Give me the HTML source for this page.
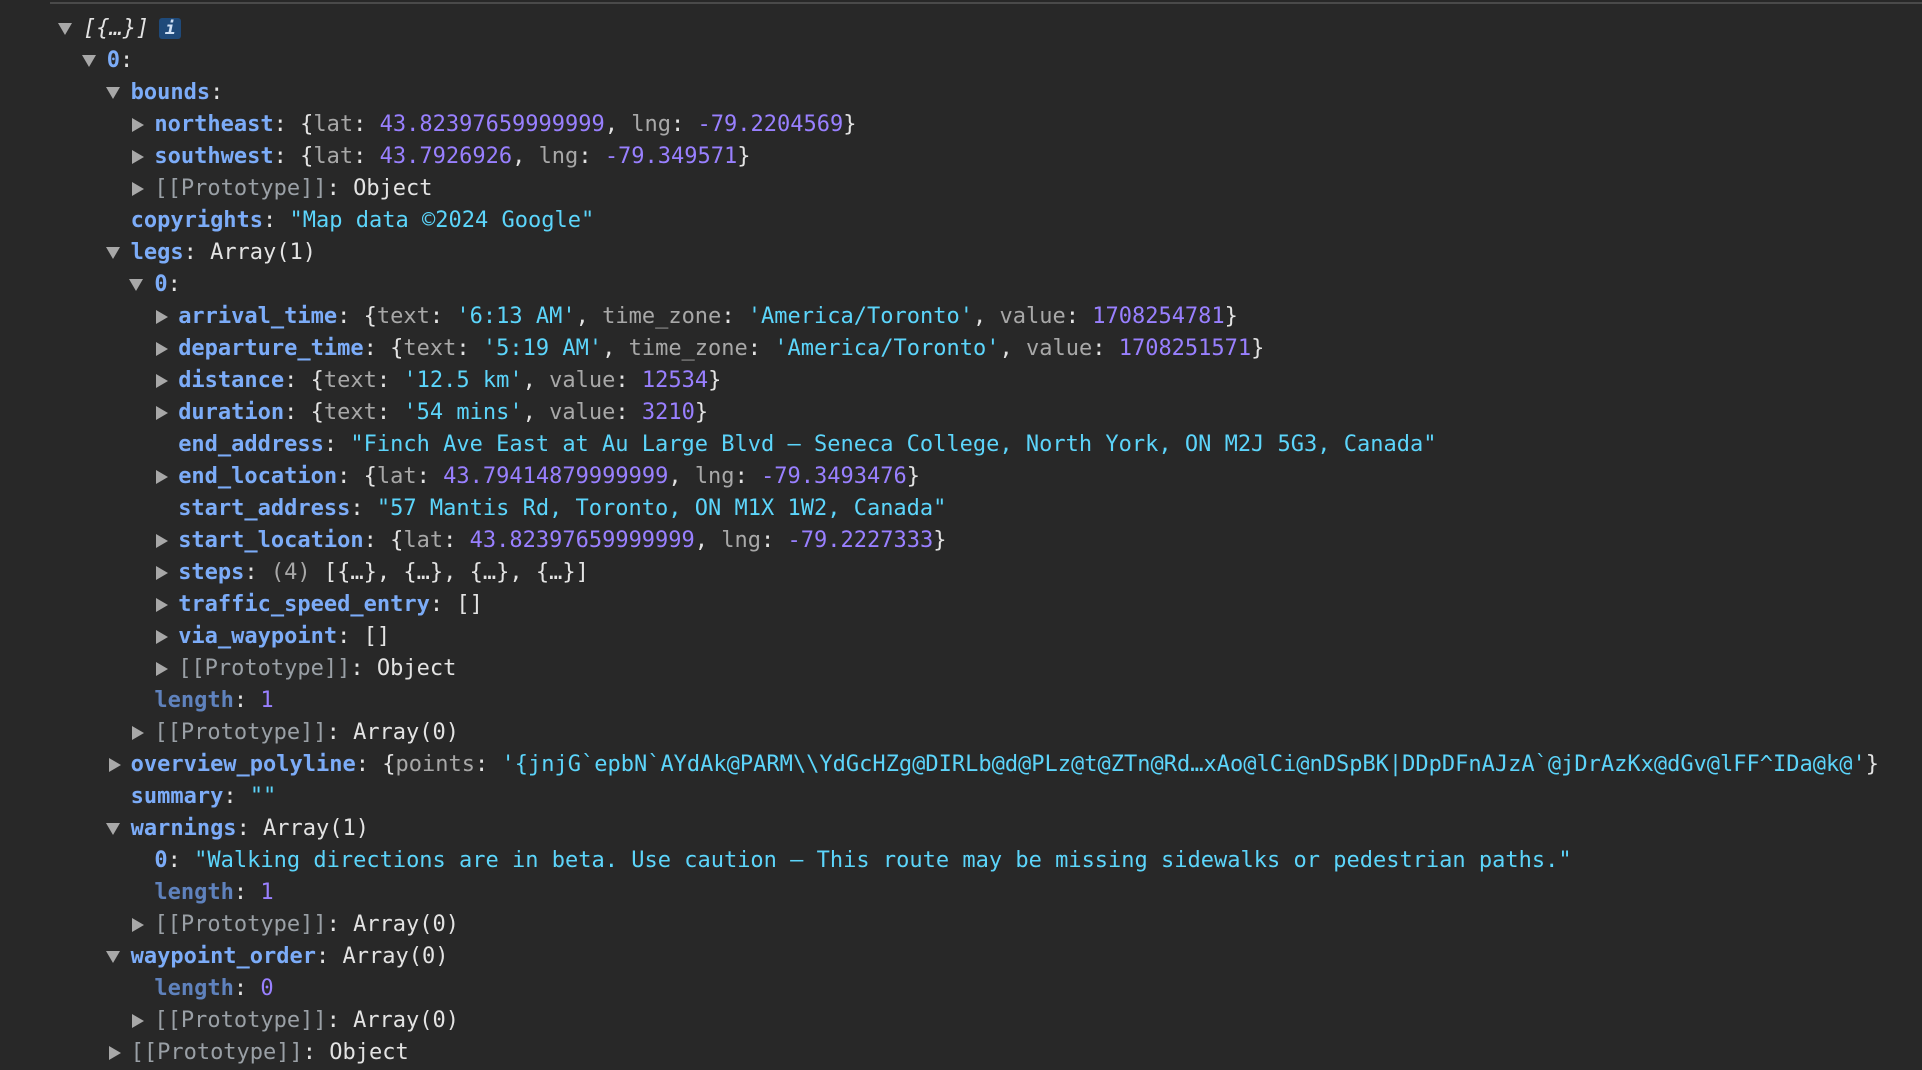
<!DOCTYPE html>
<html><head><meta charset="utf-8"><style>
html,body{margin:0;padding:0;background:#282828;width:1922px;height:1070px;overflow:hidden}
.top{position:absolute;left:50px;top:2px;width:1872px;height:2px;background:#4a4a4a}
.r{position:absolute;height:32px;line-height:32px;font-family:"DejaVu Sans Mono","Liberation Mono",monospace;font-size:22px;color:#e3e3e3;white-space:pre}
.k{color:#7cacf8;font-weight:bold}
.d{color:#5f82bd;font-weight:bold}
.n{color:#9980ff}
.s{color:#5cd5fb}
.g{color:#a8a8a8}
.p{color:#9aa0a6}
.t{position:absolute;width:0;height:0}
.e{border-left:7.5px solid transparent;border-right:7.5px solid transparent;border-top:12px solid #a8a8a8}
.c{border-top:7px solid transparent;border-bottom:7px solid transparent;border-left:12px solid #a8a8a8}
.i{display:inline-block;width:22px;height:21px;line-height:21px;background:#1f4a7a;color:#cfe0f5;border-radius:3px;text-align:center;font-style:italic;font-weight:bold;font-size:18px;vertical-align:1px;margin-left:10px}
</style></head><body>
<div class="top"></div>
<div id="c"></div>
<script>
var rows=[
[0,'e','<i>[{…}]</i><span class="i">i</span>'],
[1,'e','<span class="k">0</span>:'],
[2,'e','<span class="k">bounds</span>:'],
[3,'c','<span class="k">northeast</span>: {<span class="g">lat</span>: <span class="n">43.82397659999999</span>, <span class="g">lng</span>: <span class="n">-79.2204569</span>}'],
[3,'c','<span class="k">southwest</span>: {<span class="g">lat</span>: <span class="n">43.7926926</span>, <span class="g">lng</span>: <span class="n">-79.349571</span>}'],
[3,'c','<span class="p">[[Prototype]]</span>: Object'],
[2,'','<span class="k">copyrights</span>: <span class="s">"Map data ©2024 Google"</span>'],
[2,'e','<span class="k">legs</span>: Array(1)'],
[3,'e','<span class="k">0</span>:'],
[4,'c','<span class="k">arrival_time</span>: {<span class="g">text</span>: <span class="s">\'6:13 AM\'</span>, <span class="g">time_zone</span>: <span class="s">\'America/Toronto\'</span>, <span class="g">value</span>: <span class="n">1708254781</span>}'],
[4,'c','<span class="k">departure_time</span>: {<span class="g">text</span>: <span class="s">\'5:19 AM\'</span>, <span class="g">time_zone</span>: <span class="s">\'America/Toronto\'</span>, <span class="g">value</span>: <span class="n">1708251571</span>}'],
[4,'c','<span class="k">distance</span>: {<span class="g">text</span>: <span class="s">\'12.5 km\'</span>, <span class="g">value</span>: <span class="n">12534</span>}'],
[4,'c','<span class="k">duration</span>: {<span class="g">text</span>: <span class="s">\'54 mins\'</span>, <span class="g">value</span>: <span class="n">3210</span>}'],
[4,'','<span class="k">end_address</span>: <span class="s">"Finch Ave East at Au Large Blvd – Seneca College, North York, ON M2J 5G3, Canada"</span>'],
[4,'c','<span class="k">end_location</span>: {<span class="g">lat</span>: <span class="n">43.79414879999999</span>, <span class="g">lng</span>: <span class="n">-79.3493476</span>}'],
[4,'','<span class="k">start_address</span>: <span class="s">"57 Mantis Rd, Toronto, ON M1X 1W2, Canada"</span>'],
[4,'c','<span class="k">start_location</span>: {<span class="g">lat</span>: <span class="n">43.82397659999999</span>, <span class="g">lng</span>: <span class="n">-79.2227333</span>}'],
[4,'c','<span class="k">steps</span>: <span class="g">(4)</span> [{…}, {…}, {…}, {…}]'],
[4,'c','<span class="k">traffic_speed_entry</span>: []'],
[4,'c','<span class="k">via_waypoint</span>: []'],
[4,'c','<span class="p">[[Prototype]]</span>: Object'],
[3,'','<span class="d">length</span>: <span class="n">1</span>'],
[3,'c','<span class="p">[[Prototype]]</span>: Array(0)'],
[2,'c','<span class="k">overview_polyline</span>: {<span class="g">points</span>: <span class="s">\'{jnjG`epbN`AYdAk@PARM\\\\YdGcHZg@DIRLb@d@PLz@t@ZTn@Rd…xAo@lCi@nDSpBK|DDpDFnAJzA`@jDrAzKx@dGv@lFF^IDa@k@\'</span>}'],
[2,'','<span class="k">summary</span>: <span class="s">""</span>'],
[2,'e','<span class="k">warnings</span>: Array(1)'],
[3,'','<span class="k">0</span>: <span class="s">"Walking directions are in beta. Use caution – This route may be missing sidewalks or pedestrian paths."</span>'],
[3,'','<span class="d">length</span>: <span class="n">1</span>'],
[3,'c','<span class="p">[[Prototype]]</span>: Array(0)'],
[2,'e','<span class="k">waypoint_order</span>: Array(0)'],
[3,'','<span class="d">length</span>: <span class="n">0</span>'],
[3,'c','<span class="p">[[Prototype]]</span>: Array(0)'],
[2,'c','<span class="p">[[Prototype]]</span>: Object']
];
var h='';
rows.forEach(function(r,i){
 var x=83+23.8*r[0], cy=29+32*i;
 if(r[1]=='e') h+='<div class="t e" style="left:'+(x-25)+'px;top:'+(cy-6)+'px"></div>';
 if(r[1]=='c') h+='<div class="t c" style="left:'+(x-22)+'px;top:'+(cy-7)+'px"></div>';
 h+='<div class="r" style="left:'+x+'px;top:'+(cy-16)+'px">'+r[2]+'</div>';
});
document.getElementById('c').innerHTML=h;
</script>
</body></html>
